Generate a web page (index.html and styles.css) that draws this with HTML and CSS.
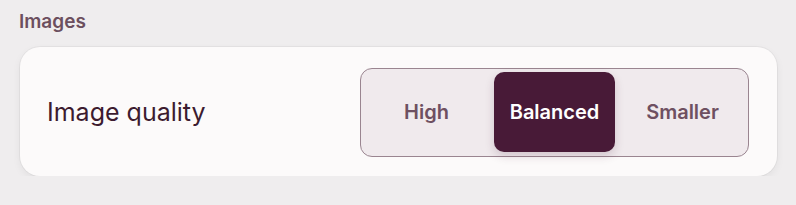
FILE: index.html
```html
<!DOCTYPE html>
<html lang="en">
<head>
    <meta charset="UTF-8">
    <meta name="viewport" content="width=device-width, initial-scale=1.0">
    <title>Images settings</title>
    <link rel="stylesheet" href="styles.css">
</head>
<body>
    <section class="settings-group">
        <h2 class="group-title">Images</h2>

        <div class="settings-card">
            <span class="setting-label">Image quality</span>

            <div class="segmented" role="radiogroup">
                <button class="segment">High</button>
                <button class="segment active">Balanced</button>
                <button class="segment">Smaller</button>
            </div>
        </div>
    </section>
</body>
</html>
```

FILE: styles.css
```css
body {
    margin: 0;
    background: #efedee;
    font-family: Inter, "Noto Sans", sans-serif;
}

.settings-group {
    padding: 10px 19px 0 20px;
}

.group-title {
    margin: 0 0 13px -1px;
    font-size: 19px;
    font-weight: 600;
    line-height: 24px;
    color: #6c4f5e;
}

.settings-card {
    display: flex;
    align-items: center;
    justify-content: space-between;
    height: 129px;
    box-sizing: border-box;
    padding: 1px 28px 0 27px;
    background: #fcfafa;
    border-radius: 20px;
    box-shadow: 0 0 0 1px rgba(0,0,0,0.04), 0 3px 8px rgba(0,0,0,0.06);
}

.setting-label {
    font-size: 25px;
    color: #3c1b2f;
}

.segmented {
    display: flex;
    gap: 7px;
    padding: 3.5px 5px;
    background: #f0eaed;
    border: 1.5px solid #9a8590;
    border-radius: 12px;
}

.segment {
    width: 121px;
    height: 80px;
    border: none;
    background: transparent;
    border-radius: 10px;
    font-family: inherit;
    font-size: 20px;
    font-weight: 600;
    color: #6e5061;
    padding: 0;
}

.segment.active {
    background: #481a37;
    color: #ffffff;
    box-shadow: 0 4px 10px rgba(72,26,55,0.18);
}
```
